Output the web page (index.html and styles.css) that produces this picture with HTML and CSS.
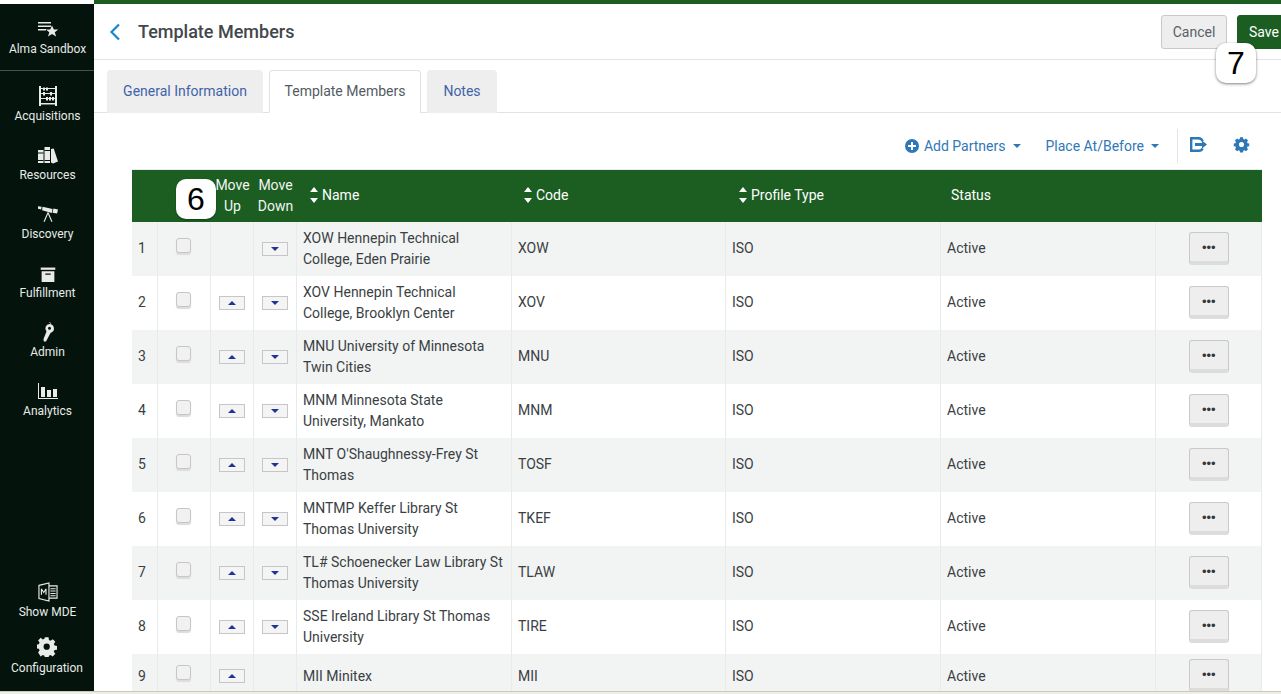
FILE: index.html
```html
<!DOCTYPE html>
<html lang="en">
<head>
<meta charset="utf-8">
<title>Template Members</title>
<link rel="stylesheet" href="styles.css">
</head>
<body>
<div class="app">
  <nav class="nav">
    <div class="nav-group">
      <a class="nav-item nav-brand">
        <svg class="ico" viewBox="0 0 22 15"><path d="M1 0h13v1.500H1zM1 3.500h13V5H1zM1 7h8v1.500H1z" fill="#e8ebe8"/><path d="M15 3.500l1.900 4h4.300l-3.400 2.700 1.300 4.300-4.100-2.600-4 2.600 1.300-4.300-3.400-2.700h4.300z" fill="#e8ebe8"/></svg>
        <span>Alma Sandbox</span>
      </a>
      <a class="nav-item">
        <svg class="ico" viewBox="0 0 20 20"><path d="M1 0h2v20H1zM17 0h2v20h-2zM3 2h14v1H3zM3 7h14v1H3zM3 12h14v1H3zM3 17h14v1.500H3z" fill="#e8ebe8"/><path d="M5 1.500h2v3H5zM8 1.500h2v3H8zM12 6h2v3.500h-2zM5 6h2v3.500H5zM8 11h2v3.500H8zM11 11h2v3.500h-2zM14 11h2v3.500h-2z" fill="#e8ebe8"/></svg>
        <span>Acquisitions</span>
      </a>
      <a class="nav-item">
        <svg class="ico" viewBox="0 0 20 18"><path d="M0 4h5.500v13H0zM6.500 1H12v16H6.500z" fill="#e8ebe8"/><path d="M13 3l2.700-.5L20 15.500 15 17.500l-2-1z" fill="#e8ebe8"/><path d="M0 6.500h5.500v1H0zM6.500 4H12v1H6.500zM0 14h5.500v1H0zM6.500 14H12v1H6.500z" fill="#04140c"/></svg>
        <span>Resources</span>
      </a>
      <a class="nav-item">
        <svg class="ico" viewBox="0 0 22 18"><path d="M0 0.500l4 .5-.5 3-4-1zM5 1l11 2.500-.8 4.500L4.500 5zM17 3l5 1-1 4.500-5-1z" fill="#e8ebe8"/><path d="M10.500 7L6 17.500h1.400l3.600-8.500 3.600 8.500H16L11.500 7z" fill="#e8ebe8"/></svg>
        <span>Discovery</span>
      </a>
      <a class="nav-item">
        <svg class="ico" viewBox="-2 -5 22 22"><path d="M1 0h16v2.500H1z" fill="#e8ebe8"/><path fill-rule="evenodd" d="M2 4h14v12H2zM6 6.500v1.500h6V6.500z" fill="#e8ebe8"/></svg>
        <span>Fulfillment</span>
      </a>
      <a class="nav-item">
        <svg class="ico" viewBox="0 0 14 20"><path fill-rule="evenodd" d="M8.500 2a4.500 4.500 0 0 1 2 8.500L9.500 11 5 19.500H2.800L2.500 17l3-7.500A4.500 4.500 0 0 1 8.500 2zM8.500 4.800a1.500 1.500 0 1 0 0 3 1.500 1.500 0 0 0 0-3z" fill="#e8ebe8"/><path d="M8.500 0.500a1 1 0 0 1 1 1" stroke="#e8ebe8" fill="none"/></svg>
        <span>Admin</span>
      </a>
      <a class="nav-item">
        <svg class="ico" viewBox="0 0 20 16"><path d="M0 0h1v16H0zM0 15h20v1H0z" fill="#e8ebe8"/><path d="M3 4h4v10H3zM9 7h4v7H9zM15 6h4v8h-4z" fill="#e8ebe8"/></svg>
        <span>Analytics</span>
      </a>
    </div>
    <div class="nav-group">
      <a class="nav-item nav-mde">
        <svg class="ico" viewBox="0 0 21 21"><path d="M1 3.500L11.500 1v19L1 17.500z" fill="none" stroke="#e8ebe8" stroke-width="1.200"/><path d="M11.500 4H20v13h-8.500" fill="none" stroke="#e8ebe8" stroke-width="1.200"/><path d="M13 6.500h5.500v1H13zM13 9h5.500v1H13zM13 11.500h5.500v1H13zM13 14h5.500v1H13z" fill="#e8ebe8"/><path d="M3 13.500V7h1.200l1.800 3 1.800-3H9v6.500H7.800V9.200L6 12 4.200 9.200v4.300z" fill="#e8ebe8"/></svg>
        <span>Show MDE</span>
      </a>
      <a class="nav-item nav-config">
        <svg class="ico" viewBox="0 0 18 18"><path fill-rule="evenodd" d="M7.300 0h3.400l.4 2.400 1.500.7 2-1.400 2.400 2.400-1.400 2 .7 1.500 2.400.4v3.400l-2.400.4-.7 1.500 1.400 2-2.400 2.400-2-1.400-1.500.7-.4 2.400H7.300l-.4-2.400-1.500-.7-2 1.400L1 14.100l1.400-2-.7-1.500L-.7 10.200V6.800l2.400-.4.7-1.500L1 2.900l2.400-2.400 2 1.400 1.500-.7zM9 5.800a2.900 2.900 0 1 0 0 5.800 2.900 2.900 0 0 0 0-5.800z" transform="translate(0 .3) scale(.97)" fill="#e8ebe8"/></svg>
        <span>Configuration</span>
      </a>
    </div>
  </nav>

  <main class="main">
    <header class="topbar">
      <div class="title-wrap">
        <svg class="back" viewBox="0 0 12 18"><path d="M10 1.500L2.500 9l7.500 7.500" fill="none" stroke="#1b87c9" stroke-width="2.200"/></svg>
        <h1 class="title">Template Members</h1>
      </div>
      <div class="actions">
        <button class="btn btn-cancel">Cancel</button>
        <button class="btn btn-save">Save</button>
      </div>
    </header>

    <div class="tabs">
      <a class="tab">General Information</a>
      <a class="tab tab-active">Template Members</a>
      <a class="tab">Notes</a>
    </div>

    <div class="content">
      <div class="toolbar">
        <a class="tool tool-add">
          <svg class="tool-plus" viewBox="0 0 14 14"><circle cx="7" cy="7" r="7" fill="#2f78b7"/><path d="M6 3h2v3h3v2H8v3H6V8H3V6h3z" fill="#fff"/></svg>
          Add Partners<i class="caret"></i>
        </a>
        <a class="tool tool-place">Place At/Before<i class="caret"></i></a>
        <span class="tool-sep"></span>
        <svg class="tool-export" viewBox="0 0 17 15"><path d="M9 1.200H1.200v12.600H9c1.500 0 3-1 3.500-2.500" fill="none" stroke="#2f78b7" stroke-width="2.400"/><path d="M8.500 1.200c2 0 3.500 1.200 4 3" fill="none" stroke="#2f78b7" stroke-width="2.400"/><path d="M5 6h7V3.500l5 4-5 4V9H5z" fill="#2f78b7"/></svg>
        <svg class="tool-gear" viewBox="0 0 18 18"><path fill-rule="evenodd" d="M7.300 1h3.400l.4 2.100 1.400.6 1.800-1.200 2.400 2.400-1.200 1.800.6 1.400 2 .4v3l-2 .4-.6 1.400 1.200 1.800-2.400 2.400-1.800-1.200-1.400.6-.4 2.100H7.300l-.4-2.100-1.400-.6-1.800 1.200-2.400-2.400 1.200-1.800-.6-1.400-2-.4v-3l2-.4.6-1.400-1.200-1.800 2.400-2.400 1.800 1.200 1.400-.6zM9 6.500a3 3 0 1 0 0 6 3 3 0 0 0 0-6z" transform="translate(.9 .4) scale(.9)" fill="#2f78b7"/></svg>
      </div>

      <table class="grid">
        <colgroup>
          <col class="c-num"><col class="c-check"><col class="c-move"><col class="c-move">
          <col class="c-data"><col class="c-code"><col class="c-data"><col class="c-data"><col>
        </colgroup>
        <thead>
          <tr>
            <th></th>
            <th></th>
            <th class="th-move">Move Up</th>
            <th class="th-move">Move Down</th>
            <th class="th-sort"><i class="sort"></i>Name</th>
            <th class="th-sort th-code"><i class="sort"></i>Code</th>
            <th class="th-sort"><i class="sort"></i>Profile Type</th>
            <th class="th-status">Status</th>
            <th></th>
          </tr>
        </thead>
        <tbody>
          <tr>
            <td class="one">1</td><td class="cc"><span class="check"></span></td><td></td><td class="cm"><span class="mv mv-down"></span></td>
            <td>XOW Hennepin Technical College, Eden Prairie</td><td class="one">XOW</td><td class="one">ISO</td><td class="one">Active</td><td class="ca"><button class="more">•••</button></td>
          </tr>
          <tr>
            <td class="one">2</td><td class="cc"><span class="check"></span></td><td class="cm"><span class="mv mv-up"></span></td><td class="cm"><span class="mv mv-down"></span></td>
            <td>XOV Hennepin Technical College, Brooklyn Center</td><td class="one">XOV</td><td class="one">ISO</td><td class="one">Active</td><td class="ca"><button class="more">•••</button></td>
          </tr>
          <tr>
            <td class="one">3</td><td class="cc"><span class="check"></span></td><td class="cm"><span class="mv mv-up"></span></td><td class="cm"><span class="mv mv-down"></span></td>
            <td>MNU University of Minnesota Twin Cities</td><td class="one">MNU</td><td class="one">ISO</td><td class="one">Active</td><td class="ca"><button class="more">•••</button></td>
          </tr>
          <tr>
            <td class="one">4</td><td class="cc"><span class="check"></span></td><td class="cm"><span class="mv mv-up"></span></td><td class="cm"><span class="mv mv-down"></span></td>
            <td>MNM Minnesota State University, Mankato</td><td class="one">MNM</td><td class="one">ISO</td><td class="one">Active</td><td class="ca"><button class="more">•••</button></td>
          </tr>
          <tr>
            <td class="one">5</td><td class="cc"><span class="check"></span></td><td class="cm"><span class="mv mv-up"></span></td><td class="cm"><span class="mv mv-down"></span></td>
            <td>MNT O'Shaughnessy-Frey St Thomas</td><td class="one">TOSF</td><td class="one">ISO</td><td class="one">Active</td><td class="ca"><button class="more">•••</button></td>
          </tr>
          <tr>
            <td class="one">6</td><td class="cc"><span class="check"></span></td><td class="cm"><span class="mv mv-up"></span></td><td class="cm"><span class="mv mv-down"></span></td>
            <td>MNTMP Keffer Library St Thomas University</td><td class="one">TKEF</td><td class="one">ISO</td><td class="one">Active</td><td class="ca"><button class="more">•••</button></td>
          </tr>
          <tr>
            <td class="one">7</td><td class="cc"><span class="check"></span></td><td class="cm"><span class="mv mv-up"></span></td><td class="cm"><span class="mv mv-down"></span></td>
            <td>TL# Schoenecker Law Library St Thomas University</td><td class="one">TLAW</td><td class="one">ISO</td><td class="one">Active</td><td class="ca"><button class="more">•••</button></td>
          </tr>
          <tr>
            <td class="one">8</td><td class="cc"><span class="check"></span></td><td class="cm"><span class="mv mv-up"></span></td><td class="cm"><span class="mv mv-down"></span></td>
            <td>SSE Ireland Library St Thomas University</td><td class="one">TIRE</td><td class="one">ISO</td><td class="one">Active</td><td class="ca"><button class="more">•••</button></td>
          </tr>
          <tr class="last">
            <td class="one">9</td><td class="cc"><span class="check"></span></td><td class="cm"><span class="mv mv-up"></span></td><td></td>
            <td>MII Minitex</td><td class="one">MII</td><td class="one">ISO</td><td class="one">Active</td><td class="ca"><button class="more">•••</button></td>
          </tr>
        </tbody>
      </table>
    </div>
  </main>
</div>
<div class="callout callout-6">6</div>
<div class="callout callout-7">7</div>
<div class="bottom-strip"></div>
</body>
</html>
```
FILE: styles.css
```css
* { box-sizing: border-box; }
html, body { margin: 0; height: 100%; overflow: hidden; background: #fff; }
body { font-family: Roboto, "Liberation Sans", sans-serif; font-size: 14px; color: #3a3f44; position: relative; }

.app { display: flex; height: 691px; padding-top: 4px; position: relative; overflow: hidden; }
.app::before { content: ""; position: absolute; left: 94px; right: 0; top: 0; height: 4px; background: #1c5e22; }

.nav { width: 94px; flex: none; background: #04140c; color: #e8ebe8; display: flex; flex-direction: column; justify-content: space-between; }
.nav-group { display: flex; flex-direction: column; }
.nav-item { display: flex; flex-direction: column; align-items: center; height: 59px; font-size: 12px; line-height: 14px; padding: 9px 0 0 1px; position: relative; }
.nav-item .ico { width: 20px; height: 20px; margin-bottom: 3px; display: block; }
.nav-item span { display: block; }
.nav-brand { height: 67px; padding-top: 18px; margin-bottom: 6px; border-bottom: 1px solid #46524b; }
.nav-brand .ico { width: 22px; height: 15px; margin-bottom: 5px; }
.nav-mde { height: 56px; padding-top: 4px; }
.nav-config { height: 57px; padding: 3px 0 0; }
.nav-config .ico { margin-bottom: 4px; }

.main { flex: 1; min-width: 0; display: flex; flex-direction: column; }

.topbar { height: 56px; flex: none; border-bottom: 1px solid #dfe2e8; display: flex; align-items: center; justify-content: space-between; padding-left: 15px; }
.title-wrap { display: flex; align-items: center; }
.back { width: 12px; height: 18px; margin-right: 17px; }
.title { font-size: 18px; font-weight: 500; margin: 0; color: #42474c; line-height: 24px; }
.actions { display: flex; gap: 10px; margin-right: -28px; margin-top: 1px; }
.btn { height: 34px; font: inherit; border-radius: 3px; padding: 0; cursor: pointer; }
.btn-cancel { width: 66px; background: #eee; border: 1px solid #c9c9c9; color: #5a6066; }
.btn-save { width: 72px; background: #1c5e22; border: 1px solid #1c5e22; color: #fff; text-align: left; padding-left: 11px; }

.tabs { height: 53px; flex: none; display: flex; align-items: flex-end; gap: 6px; padding-left: 13px; border-bottom: 1px solid #dfe2e8; }
.tab { height: 43px; background: #eeeeef; border-radius: 4px 4px 0 0; color: #3e63a8; display: flex; align-items: center; justify-content: center; padding: 0 0 2px; margin-bottom: -1px; white-space: nowrap; }
.tab:nth-child(1) { width: 156px; }
.tab-active { width: 152px; background: #fff; border: 1px solid #dfe2e8; border-bottom-color: #fff; color: #555b62; }
.tab:nth-child(3) { width: 70px; }

.content { padding: 0 19px 0 38px; }
.toolbar { height: 57px; display: flex; align-items: center; justify-content: flex-end; color: #2f78b7; border-bottom: 1px solid #e8eaee; padding-top: 10px; }
.tool { display: inline-flex; align-items: center; white-space: nowrap; }
.tool-add { margin-right: 25px; }
.tool-place { margin-right: 27px; }
.tool-plus { width: 14px; height: 14px; margin-right: 5px; }
.caret { display: inline-block; margin-left: 7px; border: 4px solid transparent; border-top-color: #2f78b7; border-bottom: 0; }
.tool-sep { width: 1px; height: 34px; background: #e2e4e8; margin-right: 12px; margin-left: -9px; }
.tool-export { width: 17px; height: 15px; margin: 0 26px 3px 0; }
.tool-gear { width: 17px; height: 17px; margin: 0 12px 3px 0; }

.grid { width: 1130px; border-collapse: collapse; table-layout: fixed; }
.c-num { width: 25px; }
.c-check { width: 53px; }
.c-move { width: 43px; }
.c-data { width: 215px; }
.c-code { width: 214px; }

.grid thead tr { height: 52px; background: #1c5e22; color: #fff; }
.grid th { font-weight: 400; text-align: left; padding: 0 6px 1px; line-height: 21px; }
.grid th.th-move { text-align: center; padding: 0 0 0 2px; color: #f2f5f2; }
.grid th.th-sort { padding-left: 14px; }
.grid th.th-code { padding-left: 13px; }
.grid th.th-status { padding-left: 11px; }
.sort { display: inline-block; width: 8px; height: 14px; margin-right: 4px; vertical-align: -2px; position: relative; }
.sort::before, .sort::after { content: ""; position: absolute; left: 0; border: 4px solid transparent; }
.sort::before { top: -1px; border-top: 0; border-bottom: 5px solid #fff; }
.sort::after { bottom: -1px; border-bottom: 0; border-top: 5px solid #fff; }

.grid tbody tr { height: 54px; }
.grid tbody tr:nth-child(odd) { background: #f2f4f3; }
.grid tbody tr.last { height: 44px; }
.grid td { padding: 0 6px 0 6.500px; line-height: 21px; border-left: 1px solid #e9ebeb; color: #3a3f44; vertical-align: middle; }
.grid td.one { padding-bottom: 2px; }
.grid tr.last td.one { padding-bottom: 0; }
.grid td:last-child { border-right: 1px solid #e9ebeb; }
.grid td:first-child { border-left: 0; padding-left: 6px; }
.cc, .cm, .ca { text-align: center; }
.grid td.cc { padding: 0 0 9px; }
.grid td.cm { padding: 0 0 1px; }
.grid tr.last td.cm { padding-bottom: 1px; }
.grid td.ca { padding: 0 0 1px 1px; }

.check { display: inline-block; width: 15px; height: 15px; background: #f1f1f1; border: 1px solid #c6c6c6; border-radius: 3px; box-shadow: 0 2px 1px #dcdcdc; vertical-align: middle; }
.mv { display: inline-block; width: 26px; height: 14px; background: #f4f4f4; border: 1px solid #c6c6c6; position: relative; vertical-align: middle; }
.mv::after { content: ""; position: absolute; left: 8px; top: 4px; border: 4px solid transparent; }
.mv-up::after { border-top: 0; border-bottom: 4px solid #1e3596; }
.mv-down::after { border-bottom: 0; border-top: 4px solid #1e3596; }
.more { width: 40px; height: 33px; background: #eee; border: 1px solid #c9c9c9; border-bottom: 4px solid #dcdcdc; border-radius: 3px; font: 13px/1 "Liberation Sans", sans-serif; color: #33383d; padding: 0; }

.callout { position: absolute; background: #fff; color: #000; font-family: "Liberation Sans", sans-serif; font-size: 32px; line-height: 40px; text-align: center; border-radius: 10px; }
.callout-6 { left: 176px; top: 179px; width: 40px; height: 40px; box-shadow: 0 1px 2px rgba(0,0,0,.35); }
.callout-7 { left: 1216px; top: 43px; width: 40px; height: 40px; box-shadow: 0 1px 3px rgba(0,0,0,.5); }
.bottom-strip { position: absolute; left: 0; right: 0; top: 691px; height: 3px; background: #eeeee4; border-top: 1px solid #c9c9bd; }
```
